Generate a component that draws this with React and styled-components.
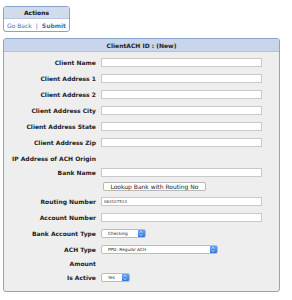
import React from "react";
import styled, { createGlobalStyle } from "styled-components";

const Global = createGlobalStyle`
  html, body { margin: 0; padding: 0; background: #ffffff; }
  body { font-family: "DejaVu Sans", Verdana, sans-serif; }
  * { box-sizing: border-box; }
`;

const Page = styled.div`
  width: 292px;
  height: 300px;
  padding: 6px 0 0 3px;
  display: flex;
  flex-direction: column;
  align-items: flex-start;
  gap: 6px;
`;

const ActionsBox = styled.div`
  width: 67px;
  border: 1px solid #8ba2c9;
  border-radius: 3px;
  overflow: hidden;
  background: #fff;
`;

const ActionsHead = styled.div`
  height: 12px;
  background: #d2dbea;
  border-bottom: 1px solid #b9c6dd;
  font-size: 6px;
  font-weight: bold;
  color: #111;
  display: flex;
  align-items: center;
  justify-content: center;
`;

const ActionsBody = styled.div`
  height: 12px;
  display: flex;
  align-items: center;
  padding-left: 3px;
  gap: 4px;
  font-size: 6px;
`;

const Link = styled.a`
  color: #3b6fb3;
  text-decoration: none;
  font-weight: ${(p) => (p.$bold ? "bold" : "normal")};
`;

const Sep = styled.span`
  color: #3b6fb3;
`;

const Panel = styled.div`
  width: 277px;
  border: 1px solid #8ba2c9;
  border-radius: 3px;
  overflow: hidden;
  background: #eeeeee;
`;

const PanelHead = styled.div`
  height: 13px;
  background: #c9d5ea;
  border-bottom: 1px solid #b3c2dc;
  font-size: 6px;
  font-weight: bold;
  color: #222;
  display: flex;
  align-items: center;
  justify-content: center;
`;

const Form = styled.div`
  display: grid;
  grid-template-columns: max-content 1fr;
  column-gap: 5px;
  padding: 2px 0 7px 8px;
`;

const Label = styled.div`
  height: ${(p) => p.$h}px;
  display: flex;
  align-items: center;
  justify-content: flex-end;
  font-size: 6px;
  font-weight: bold;
  color: #222;
  white-space: nowrap;
`;

const Cell = styled.div`
  height: ${(p) => p.$h}px;
  display: flex;
  align-items: center;
`;

const TextInput = styled.input`
  width: 161px;
  height: 9px;
  border: 1px solid #c9c9c9;
  background: #fff;
  padding: 0 2px;
  font-family: "DejaVu Sans", sans-serif;
  font-size: 4px;
  color: #333;
  outline: none;
`;

const Button = styled.button`
  margin-left: 2px;
  height: 9px;
  width: 103px;
  padding: 0;
  border: 1px solid #b8b8b8;
  border-radius: 2px;
  background: #fff;
  font-family: "DejaVu Sans", sans-serif;
  font-size: 6px;
  color: #222;
  display: flex;
  align-items: center;
  justify-content: center;
`;

const SelectBox = styled.div`
  width: ${(p) => p.$w}px;
  height: 9px;
  display: flex;
  border: 1px solid #bcbcbc;
  border-radius: 2px;
  background: #fff;
  overflow: hidden;
`;

const Select = styled.select`
  flex: 1;
  min-width: 0;
  appearance: none;
  border: none;
  background: transparent;
  font-family: "DejaVu Sans", sans-serif;
  font-size: 4.3px;
  color: #222;
  padding: 0 0 0 6px;
  height: 100%;
  outline: none;
`;

const Stepper = styled.span`
  width: 7px;
  background: linear-gradient(#6aa6f5, #2f75e0);
  display: flex;
  align-items: center;
  justify-content: center;
`;

function Arrows() {
  return (
    <svg width="4" height="7" viewBox="0 0 4 7">
      <path d="M0.7 2.7 L2 1.3 L3.3 2.7" fill="none" stroke="#fff" strokeWidth="0.7" />
      <path d="M0.7 4.3 L2 5.7 L3.3 4.3" fill="none" stroke="#fff" strokeWidth="0.7" />
    </svg>
  );
}

function Dropdown({ w, value }) {
  return (
    <SelectBox $w={w}>
      <Select defaultValue={value}>
        <option>{value}</option>
      </Select>
      <Stepper>
        <Arrows />
      </Stepper>
    </SelectBox>
  );
}

const rows = [
  { label: "Client Name", h: 16, kind: "input" },
  { label: "Client Address 1", h: 16, kind: "input" },
  { label: "Client Address 2", h: 16, kind: "input" },
  { label: "Client Address City", h: 16, kind: "input" },
  { label: "Client Address State", h: 16, kind: "input" },
  { label: "Client Address Zip", h: 16, kind: "input" },
  { label: "IP Address of ACH Origin", h: 16, kind: "none" },
  { label: "Bank Name", h: 13, kind: "input" },
  { label: "", h: 14, kind: "button" },
  { label: "Routing Number", h: 16, kind: "input", value: "063107513" },
  { label: "Account Number", h: 16, kind: "input" },
  { label: "Bank Account Type", h: 17, kind: "select", w: 45, value: "Checking" },
  { label: "ACH Type", h: 14, kind: "select", w: 117, value: "PPD: Regular ACH" },
  { label: "Amount", h: 15, kind: "none" },
  { label: "Is Active", h: 13, kind: "select", w: 29, value: "Yes" },
];

export default function App() {
  return (
    <>
      <Global />
      <Page>
        <ActionsBox>
          <ActionsHead>Actions</ActionsHead>
          <ActionsBody>
            <Link href="#">Go Back</Link>
            <Sep>|</Sep>
            <Link href="#" $bold>
              Submit
            </Link>
          </ActionsBody>
        </ActionsBox>
        <Panel>
          <PanelHead>ClientACH ID : (New)</PanelHead>
          <Form>
            {rows.map((r, i) => (
              <React.Fragment key={i}>
                <Label $h={r.h}>{r.label}</Label>
                <Cell $h={r.h}>
                  {r.kind === "input" && <TextInput defaultValue={r.value || ""} />}
                  {r.kind === "button" && <Button>Lookup Bank with Routing No</Button>}
                  {r.kind === "select" && <Dropdown w={r.w} value={r.value} />}
                </Cell>
              </React.Fragment>
            ))}
          </Form>
        </Panel>
      </Page>
    </>
  );
}
